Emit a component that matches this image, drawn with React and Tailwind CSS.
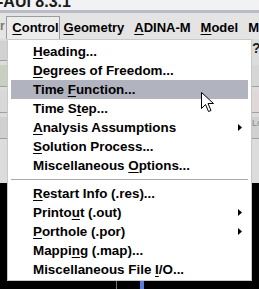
import React from 'react';

const font = { fontFamily: '"Liberation Sans", Arial, sans-serif' };

// label parts: [before, underlined letter, after]
const groupOne = [
    { pre: '', key: 'H', post: 'eading...' },
    { pre: '', key: 'D', post: 'egrees of Freedom...' },
    { pre: 'Time ', key: 'F', post: 'unction...', active: true },
    { pre: 'Time S', key: 't', post: 'ep...' },
    { pre: '', key: 'A', post: 'nalysis Assumptions', sub: true },
    { pre: '', key: 'S', post: 'olution Process...' },
    { pre: 'Miscellaneous ', key: 'O', post: 'ptions...' },
];

const groupTwo = [
    { pre: '', key: 'R', post: 'estart Info (.res)...' },
    { pre: 'Printo', key: 'u', post: 't (.out)', sub: true },
    { pre: '', key: 'P', post: 'orthole (.por)', sub: true },
    { pre: 'Mappi', key: 'n', post: 'g (.map)...' },
    { pre: 'Miscellaneous File ', key: 'I', post: '/O...' },
];

const MenuRow = ({ item }) => (
    <div className={`h-[19px] flex items-center pl-[22px] pr-[6px] ${item.active ? 'bg-[#b1b3bf]' : ''}`}>
        <span className="text-[13.4px] font-bold text-black leading-none whitespace-nowrap">
            {item.pre}<span className="underline underline-offset-2">{item.key}</span>{item.post}
        </span>
        {item.sub && (
            <svg className="ml-auto" width="4" height="7" viewBox="0 0 4 7">
                <path d="M0 0 L4 3.5 L0 7 Z" fill="#000" />
            </svg>
        )}
    </div>
);

const Cursor = () => (
    <svg className="absolute left-[201px] top-[92px]" width="13" height="21" viewBox="0 0 13 21">
        <path d="M0.5 0.5 L0.5 16.5 L4.5 12.5 L7.5 19.5 L10 18.5 L7 11.5 L12.5 11.5 Z" fill="#fff" stroke="#000" strokeWidth="1" strokeLinejoin="miter" />
    </svg>
);

export default function App() {
    return (
        <div className="w-[259px] h-[289px] overflow-hidden relative bg-black" style={font}>
            {/* title bar */}
            <div className="h-[10px] bg-[#f2f2f4] overflow-hidden">
                <div className="text-[16px] font-bold text-[#1a1a1a] leading-none -mt-[6px] -ml-[2px]">-AUI 8.3.1</div>
            </div>
            <div className="h-[3px] bg-[#b9bcc6]" />

            {/* menu bar */}
            <div className="h-[26px] bg-[#e4e4e4] flex items-end text-[13px] font-bold text-black">
                <div className="w-[7px] h-full flex items-center text-[#777] text-[12px]">r</div>
                <div className="h-[23px] w-[56px] border-t border-l border-r border-[#9c9c9c] bg-[#ececec] flex items-center pl-[5px]">
                    <span><span className="underline underline-offset-2">C</span>ontrol</span>
                </div>
                <div className="h-[23px] flex items-center gap-[10px] pl-[4px] whitespace-nowrap">
                    <span><span className="underline underline-offset-2">G</span>eometry</span>
                    <span><span className="underline underline-offset-2">A</span>DINA-M</span>
                    <span><span className="underline underline-offset-2">M</span>odel</span>
                    <span>M</span>
                </div>
            </div>

            {/* toolbars behind the menu */}
            <div className="h-[144px] bg-[#dcdcdc] flex justify-between">
                <div className="w-[7px] flex flex-col gap-[4px] pt-[2px]">
                    <div className="h-[20px] bg-[#d2d2d2] border-b border-[#a0a0a0]" />
                    <div className="h-[22px] bg-[#c8d0c0] border-b border-[#a0a0a0]" />
                    <div className="h-[22px] bg-[#d8d8d8] border-b border-[#a0a0a0]" />
                    <div className="h-[22px] bg-[#d0d0d0] border-b border-[#a0a0a0]" />
                </div>
                <div className="w-[7px] flex flex-col gap-[4px] pt-[2px] items-start">
                    <div className="h-[20px] text-[14px] font-bold text-[#222] leading-none">?</div>
                    <div className="h-[22px] w-full bg-[#d6d6d6] border-b border-[#a0a0a0]" />
                    <div className="h-[22px] w-full bg-[#e0d8d8] border-b border-[#a0a0a0]" />
                    <div className="h-[22px] w-full bg-[#d0d0d0] border-b border-[#a0a0a0] text-[9px] text-[#888]">Lo</div>
                </div>
            </div>
            <div className="h-[106px] bg-black flex items-end pl-[116px]">
                <div className="w-[1px] bg-[#777] h-[8px]" />
                <div className="w-[4px] bg-[#5b7be0] h-[8px] ml-[23px]" />
            </div>

            {/* dropdown */}
            <div className="absolute left-[7px] top-[39px] w-[245px] h-[242px] bg-white border border-[#c8c8c8] pt-[2px] px-[3px]">
                {groupOne.map((item, i) => <MenuRow key={i} item={item} />)}
                <div className="h-[9px] flex items-center">
                    <div className="h-[1px] w-full bg-[#a8a8a8]" />
                </div>
                {groupTwo.map((item, i) => <MenuRow key={i} item={item} />)}
            </div>

            <Cursor />
        </div>
    );
}
